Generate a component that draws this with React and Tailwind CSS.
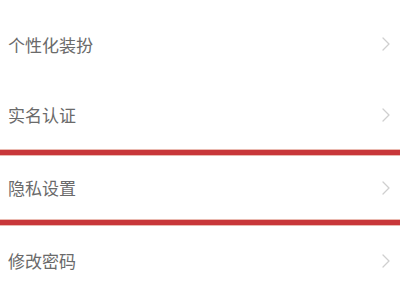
import React from 'react';

const Chevron = () => (
  <svg width="8" height="14" viewBox="0 0 8 14" fill="none" className="shrink-0">
    <path d="M1 1l6 6-6 6" stroke="#cfcfcf" strokeWidth="1.3" strokeLinecap="round" strokeLinejoin="round" />
  </svg>
);

const Row = ({ label, h }) => (
  <div className={`flex items-center justify-between pl-2 pr-[10px] ${h}`}>
    <span className="text-[17px] text-[#6a6a6a] leading-none">{label}</span>
    <Chevron />
  </div>
);

const RedLine = () => <div className="h-[7px] bg-[#c8373a] border-y border-[#eab9b0]" />;

export default function App() {
  return (
    <div
      className="w-[400px] h-[300px] bg-white overflow-hidden pt-2"
      style={{ fontFamily: '"Noto Sans CJK SC", "Noto Sans", sans-serif' }}
    >
      <Row label="个性化装扮" h="h-[72px]" />
      <Row label="实名认证" h="h-[69px]" />
      <RedLine />
      <Row label="隐私设置" h="h-[63px]" />
      <RedLine />
      <Row label="修改密码" h="h-[69px]" />
    </div>
  );
}
